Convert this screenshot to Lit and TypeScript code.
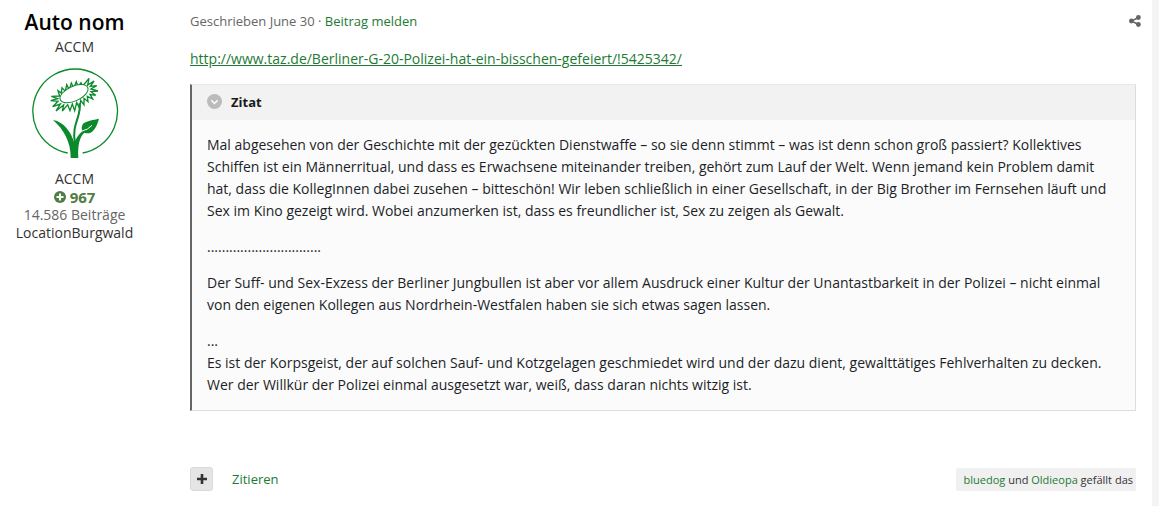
import { LitElement, html, css, svg } from "lit";
import { customElement, property } from "lit/decorators.js";

const base = css`
  :host { display: block; }
  * { box-sizing: border-box; }
  a { color: #1d7a34; text-decoration: none; }
  p, h2, ul { margin: 0; padding: 0; }
  svg { display: block; flex: none; }
`;

const flower = svg`
  <path d="M144 279 A127 127 0 1 1 189 279" fill="none" stroke="#0a8a2b" stroke-width="4"/>
  <path d="M120 108 L115 92 L125 99 L127 83 L137 94 L141 74 L149 89 L155 69 L162 84 L170 65 L175 80 L184 68 L189 78 L208 55 L204 75 L223 63 L212 79 L231 77 L214 87 L235 93 L214 95 L228 106 L211 103 L219 117 L203 109 L205 125 L193 115 L193 134 L183 121 L180 145 L171 128 L165 152 L158 132 L151 152 L144 134 L128 153 L132 135 L109 153 L122 132 L99 140 L115 124 L93 122 L114 116 L95 109 Z" fill="#fff" stroke="#0a8a2b" stroke-width="4"/>
  <ellipse cx="163" cy="101" rx="45" ry="22" transform="rotate(-24 163 101)" fill="#fff" stroke="#0a8a2b" stroke-width="3"/>
  <path d="M179 130 C188 170 154 188 166 252" fill="none" stroke="#0a8a2b" stroke-width="6"/>
  <path d="M100 180 C134 186 154 216 164 249 C168 236 177 224 188 214 C181 185 200 184 238 176 C229 209 214 226 194 218 C178 232 174 261 176 294 L153 294 C154 246 132 208 100 180 Z" fill="#0a8a2b"/>
  <path d="M187 213 Q204 210 217 196" fill="none" stroke="#fff" stroke-width="3"/>
`;

@customElement("author-card")
class AuthorCard extends LitElement {
  @property() name = "";
  @property() group = "";
  @property() reputation = "";
  @property() posts = "";
  @property() location = "";

  static styles = [base, css`
    :host { color: #333; font-size: 14px; line-height: 18px; text-align: center; }
    .name { color: #000; font-size: 21px; line-height: 28px; font-weight: 600; padding-top: 8px; margin-bottom: 2px; }
    .avatar { width: 88px; height: 90px; margin: 12px auto; }
    .reputation { display: flex; align-items: center; justify-content: center; gap: 4px; color: #4f7d43; font-size: 15px; font-weight: 700; }
    .posts { color: #666; }
  `];

  render() {
    return html`
      <h2 class="name">${this.name}</h2>
      <p>${this.group}</p>
      <svg class="avatar" viewBox="34 24 264 270" role="img" aria-label="Avatar">${flower}</svg>
      <p>${this.group}</p>
      <p class="reputation">
        <svg width="12" height="12" viewBox="0 0 12 12" aria-hidden="true">
          <circle cx="6" cy="6" r="6" fill="#4f7d43"/><path d="M6 2.5v7M2.5 6h7" stroke="#fff" stroke-width="2"/>
        </svg>${this.reputation}
      </p>
      <p class="posts">${this.posts}</p>
      <p>${this.location}</p>
    `;
  }
}

@customElement("quote-box")
class QuoteBox extends LitElement {
  @property({ attribute: false }) paragraphs: string[][] = [];

  static styles = [base, css`
    .quote { margin: 0; background: #fbfbfb; border: 1px solid #ddd; border-top-color: #e8e8e8; border-left: 2px solid #666; }
    .toggle { display: flex; align-items: center; gap: 9px; width: 100%; height: 35px; margin: 0; padding: 0 15px 2px; border: 0; background: #f2f2f2; color: #1a1a1a; font: 700 13px/20px "Open Sans", sans-serif; text-align: left; }
    .body { display: grid; gap: 14px; padding: 14px 15px; color: #1c1f28; }
  `];

  render() {
    return html`
      <blockquote class="quote">
        <button class="toggle" type="button">
          <svg width="15" height="15" viewBox="0 0 15 15" aria-hidden="true">
            <circle cx="7.5" cy="7.5" r="7.5" fill="#bbb"/><path d="M4.3 6.3l3.2 3.2 3.2-3.2" fill="none" stroke="#fff" stroke-width="1.5"/>
          </svg>Zitat
        </button>
        <div class="body">
          ${this.paragraphs.map(lines => html`<p>${lines.map((line, i) => html`${i ? html`<br>` : ""}${line}`)}</p>`)}
        </div>
      </blockquote>
    `;
  }
}

@customElement("app-root")
class AppRoot extends LitElement {
  static styles = [base, css`
    :host { background: #fff; font: 14px/22px "Open Sans", sans-serif; color: #1c1f28; }
    .post { display: grid; grid-template-columns: 149px minmax(0, 1fr); column-gap: 41px; min-height: 100vh; padding-right: 16px; border-right: 7px solid #f4f4f4; }
    .content { padding-top: 10px; }
    .meta { display: flex; justify-content: space-between; align-items: center; margin-bottom: 16px; color: #666; font-size: 13px; }
    .share { padding: 0; margin-right: -5px; border: 0; background: none; }
    .source { margin-bottom: 14px; }
    .source a { text-decoration: underline; }
    .actions { display: flex; align-items: center; margin: 56px 0 15px; font-size: 13px; }
    .add { display: grid; place-items: center; width: 23px; height: 24px; margin-right: 19px; padding: 0; border: 1px solid #d9d9d9; border-radius: 3px; background: #e5e5e5; }
    .likes { margin-left: auto; padding: 0 3px 0 8px; border-radius: 2px; background: #f0f0f0; color: #333; font-size: 11px; line-height: 23px; }
  `];

  private paragraphs = [
    ["Mal abgesehen von der Geschichte mit der gezückten Dienstwaffe – so sie denn stimmt – was ist denn schon groß passiert? Kollektives Schiffen ist ein Männerritual, und dass es Erwachsene miteinander treiben, gehört zum Lauf der Welt. Wenn jemand kein Problem damit hat, dass die KollegInnen dabei zusehen – bitteschön! Wir leben schließlich in einer Gesellschaft, in der Big Brother im Fernsehen läuft und Sex im Kino gezeigt wird. Wobei anzumerken ist, dass es freundlicher ist, Sex zu zeigen als Gewalt."],
    ["..............................."],
    ["Der Suff- und Sex-Exzess der Berliner Jungbullen ist aber vor allem Ausdruck einer Kultur der Unantastbarkeit in der Polizei – nicht einmal von den eigenen Kollegen aus Nordrhein-Westfalen haben sie sich etwas sagen lassen."],
    ["...", "Es ist der Korpsgeist, der auf solchen Sauf- und Kotzgelagen geschmiedet wird und der dazu dient, gewalttätiges Fehlverhalten zu decken. Wer der Willkür der Polizei einmal ausgesetzt war, weiß, dass daran nichts witzig ist."],
  ];

  render() {
    return html`
      <article class="post">
        <author-card name="Auto nom" group="ACCM" reputation="967" posts="14.586 Beiträge" location="LocationBurgwald"></author-card>
        <div class="content">
          <div class="meta">
            <span>Geschrieben June 30 · <a href="#melden">Beitrag melden</a></span>
            <button class="share" type="button" aria-label="Teilen">
              <svg width="12" height="12" viewBox="0 0 12 12" fill="#666" aria-hidden="true">
                <circle cx="2.4" cy="6" r="2.4"/><circle cx="9.4" cy="2.5" r="2.4"/><circle cx="9.4" cy="9.5" r="2.4"/>
                <path d="M9.4 2.5L2.4 6l7 3.5" fill="none" stroke="#666" stroke-width="1.5"/>
              </svg>
            </button>
          </div>
          <p class="source"><a href="http://www.taz.de/Berliner-G-20-Polizei-hat-ein-bisschen-gefeiert/!5425342/">http://www.taz.de/Berliner-G-20-Polizei-hat-ein-bisschen-gefeiert/!5425342/</a></p>
          <quote-box .paragraphs=${this.paragraphs}></quote-box>
          <div class="actions">
            <button class="add" type="button" aria-label="Zitat hinzufügen">
              <svg width="10" height="10" viewBox="0 0 10 10" aria-hidden="true"><path d="M5 0v10M0 5h10" stroke="#333" stroke-width="2.6"/></svg>
            </button>
            <a href="#zitieren">Zitieren</a>
            <p class="likes"><a href="#bluedog">bluedog</a> und <a href="#oldieopa">Oldieopa</a> gefällt das</p>
          </div>
        </div>
      </article>
    `;
  }
}
